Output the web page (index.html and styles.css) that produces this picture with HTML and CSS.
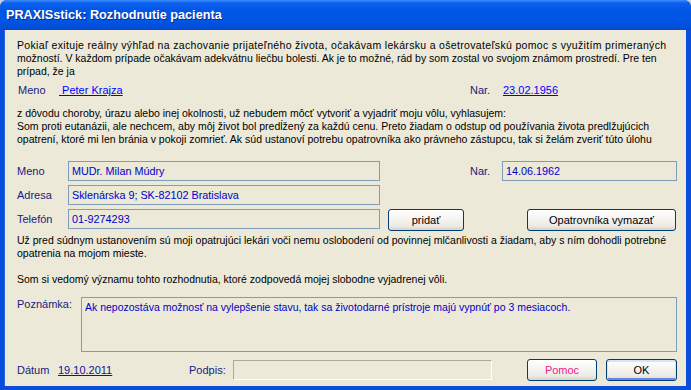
FILE: index.html
```html
<!DOCTYPE html>
<html lang="sk">
<head>
  <meta charset="UTF-8" />
  <title>PRAXISstick: Rozhodnutie pacienta</title>
  <link rel="stylesheet" href="styles.css">
</head>
<body>

  <div class="window">
    <div class="titlebar">
      <span class="title">PRAXISstick: Rozhodnutie pacienta</span>
    </div>

    <div class="client">
      <p class="text intro">
        <span class="line loose">Pokiaľ exituje reálny výhľad na zachovanie prijateľného života, očakávam lekársku a ošetrovateľskú pomoc s využitím primeraných</span>
        <span class="line">možností. V každom prípade očakávam adekvátnu liečbu bolesti. Ak je to možné, rád by som zostal vo svojom známom prostredí. Pre ten</span>
        <span class="line">prípad, že ja</span>
      </p>

      <div class="patient-row">
        <div class="patient-name">
          <span class="label patient-label">Meno</span>
          <a class="link name-link" href="#"> Peter Krajza</a>
        </div>
        <span class="label birth-label">Nar.</span>
        <a class="link" href="#">23.02.1956</a>
      </div>

      <p class="text declaration">
        <span class="line">z dôvodu choroby, úrazu alebo inej okolnosti, už nebudem môcť vytvoriť a vyjadriť moju vôlu, vyhlasujem:</span>
        <span class="line">Som proti eutanázii, ale nechcem, aby môj život bol predĺžený za každú cenu. Preto žiadam o odstup od používania života predlžujúcich</span>
        <span class="line">opatrení, ktoré mi len bránia v pokoji zomrieť. Ak súd ustanoví potrebu opatrovníka ako právneho zástupcu, tak si želám zveriť túto úlohu</span>
      </p>

      <div class="guardian">
        <div class="row">
          <span class="label field-label">Meno</span>
          <div class="field wide">MUDr. Milan Múdry</div>
          <span class="label nar-label">Nar.</span>
          <div class="field date">14.06.1962</div>
        </div>
        <div class="row">
          <span class="label field-label">Adresa</span>
          <div class="field wide">Sklenárska 9; SK-82102 Bratislava</div>
        </div>
        <div class="row">
          <span class="label field-label">Telefón</span>
          <div class="field wide">01-9274293</div>
          <button class="btn add-btn">pridať</button>
          <button class="btn remove-btn">Opatrovníka vymazať</button>
        </div>
      </div>

      <p class="text closing">
        <span class="line">Už pred súdnym ustanovením sú moji opatrujúci lekári voči nemu oslobodení od povinnej mlčanlivosti a žiadam, aby s ním dohodli potrebné</span>
        <span class="line">opatrenia na mojom mieste.</span>
        <span class="line">&nbsp;</span>
        <span class="line">Som si vedomý významu tohto rozhodnutia, ktoré zodpovedá mojej slobodne vyjadrenej vôli.</span>
      </p>

      <div class="note-row">
        <span class="label note-label">Poznámka:</span>
        <div class="note-box">Ak nepozostáva možnosť na vylepšenie stavu, tak sa životodarné prístroje majú vypnúť po 3 mesiacoch.</div>
      </div>

      <div class="footer">
        <span class="label date-label">Dátum</span>
        <a class="link sign-date" href="#">19.10.2011</a>
        <span class="label sign-label">Podpis:</span>
        <div class="sign-box"></div>
        <button class="btn help-btn">Pomoc</button>
        <button class="btn ok-btn">OK</button>
      </div>
    </div>
  </div>

</body>
</html>
```

FILE: styles.css
```css
body {
  margin: 0;
  padding: 0;
  background: #c9cfdc;
  font-family: "Liberation Sans", sans-serif;
  font-size: 11px;
}

.window {
  width: 691px;
  height: 390px;
  display: flex;
  flex-direction: column;
  background: #0a4ddc;
  border-radius: 7px 7px 0 0;
  overflow: hidden;
}

.titlebar {
  height: 30px;
  display: flex;
  align-items: center;
  padding-left: 6px;
  background: linear-gradient(to bottom, #3c8dfb 0%, #0b60f0 10%, #0256e6 35%, #0155e4 70%, #014fd8 90%, #0a46c8 100%);
}

.title {
  color: white;
  font-weight: bold;
  font-size: 12.7px;
  text-shadow: 1px 1px 0 #0b2b8c;
  padding-bottom: 1px;
}

.client {
  flex: 1;
  margin: 0 5px 4px 4px;
  padding: 9px 9px 0 13px;
  background: #ece9d8;
  color: black;
  box-shadow: inset 1px 0 0 #2a62e6;
}

.text {
  margin: 0;
  font-size: 10.5px;
  line-height: 13px;
}

.line {
  display: block;
  white-space: nowrap;
}

.line.loose {
  letter-spacing: 0.33px;
}

.label {
  color: #1a1a80;
  white-space: nowrap;
}

.link {
  color: #0000ff;
  text-decoration: underline;
  white-space: pre;
}

.patient-row {
  display: flex;
  line-height: 13px;
  margin-top: 6px;
}

.patient-name {
  width: 453px;
  display: flex;
}

.patient-label {
  width: 41px;
  padding-left: 1px;
}

.birth-label {
  width: 33px;
}

.declaration {
  margin-top: 10px;
}

.guardian {
  margin-top: 15px;
  display: flex;
  flex-direction: column;
  gap: 4px;
}

.row {
  display: flex;
  align-items: flex-start;
}

.field-label,
.nar-label {
  line-height: 20px;
}

.field-label {
  width: 51px;
}

.nar-label {
  width: 32px;
  margin-left: 90px;
}

.field {
  height: 18px;
  line-height: 18px;
  padding: 0 3px;
  border: 1px solid #7f9db9;
  color: #0000c8;
  font-size: 10.8px;
  white-space: nowrap;
}

.field.wide {
  width: 304px;
}

.field.date {
  width: 167px;
}

.btn {
  height: 22px;
  padding: 0;
  border: 1px solid #003c74;
  border-radius: 3px;
  background: linear-gradient(to bottom, #ffffff 0%, #f6f5f1 40%, #eceae4 80%, #d8d2c6 100%);
  font-family: inherit;
  font-size: 11px;
  color: black;
  cursor: pointer;
}

.add-btn {
  width: 76px;
  margin-left: 8px;
}

.remove-btn {
  width: 149px;
  margin-left: auto;
  margin-right: 1px;
}

.closing {
  margin-top: 3px;
}

.note-row {
  display: flex;
  align-items: flex-start;
  margin-top: 11px;
}

.note-label {
  width: 64px;
  line-height: 13px;
  margin-top: 1px;
}

.note-box {
  flex: 1;
  height: 49px;
  padding: 3px 3px 1px 3px;
  border: 1px solid #7f9db9;
  color: #0000c8;
  font-size: 10.5px;
  line-height: 13px;
  white-space: nowrap;
}

.footer {
  display: flex;
  align-items: center;
  height: 22px;
  margin-top: 7px;
}

.date-label {
  width: 41px;
}

.sign-date {
  color: #12129a;
  width: 131px;
}

.sign-label {
  width: 44px;
}

.sign-box {
  width: 257px;
  height: 18px;
  border: 1px solid;
  border-color: #aca899 #ffffff #ffffff #aca899;
}

.help-btn {
  width: 70px;
  margin-left: 35px;
  color: #f0208c;
}

.ok-btn {
  width: 71px;
  margin-left: 9px;
  box-shadow: inset 0 1px 0 1px #cee7ff, inset 0 -1px 0 1px #6982ee;
}
```
